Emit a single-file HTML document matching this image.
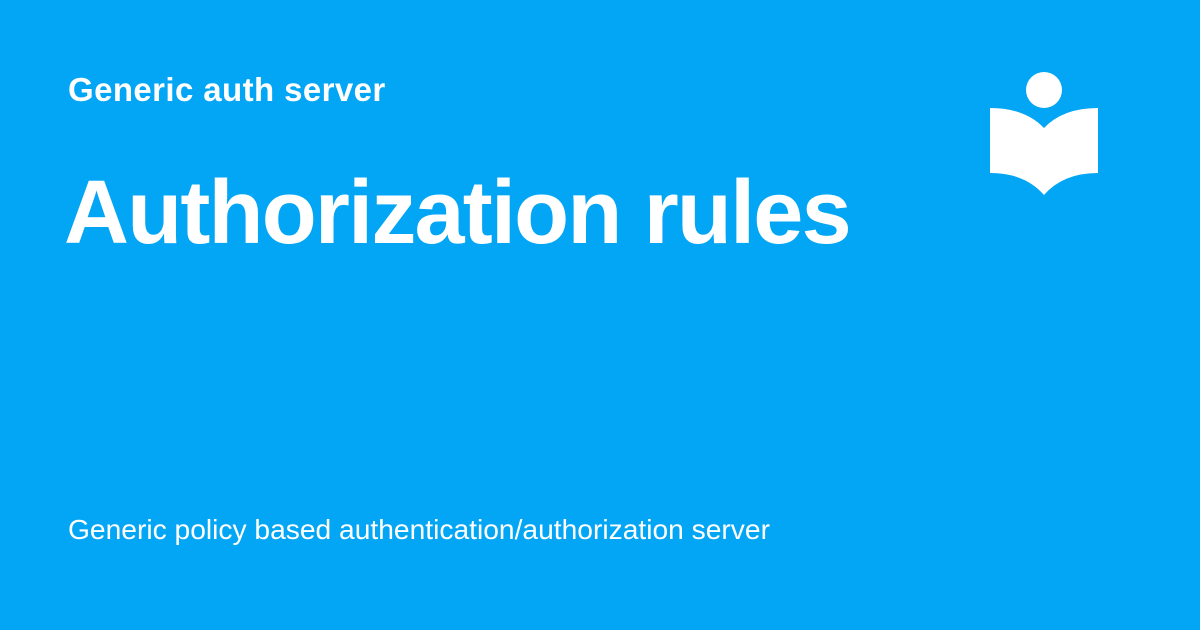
<!DOCTYPE html>
<html><head><meta charset="utf-8"><style>
html,body{margin:0;padding:0}
body{width:1200px;height:630px;background:#03a6f4;position:relative;overflow:hidden;font-family:"Liberation Sans",sans-serif;color:#fff}
.t{position:absolute;white-space:nowrap;line-height:1}
</style></head><body>
<div class="t" style="left:68px;top:73px;font-size:33px;font-weight:bold;letter-spacing:0.4px">Generic auth server</div>
<div class="t" style="left:64px;top:168px;font-size:90px;font-weight:bold;letter-spacing:-1.8px">Authorization rules</div>
<div class="t" style="left:68px;top:515px;font-size:28.2px">Generic policy based authentication/authorization server</div>
<svg style="position:absolute;left:0;top:0" width="1200" height="630">
<circle cx="1044" cy="90" r="18" fill="#fff"/>
<path d="M990 108 Q1025 108 1044 128 Q1063 108 1098 108 L1098 173 Q1063 173 1044 195 Q1025 173 990 173 Z" fill="#fff"/>
</svg>
</body></html>
